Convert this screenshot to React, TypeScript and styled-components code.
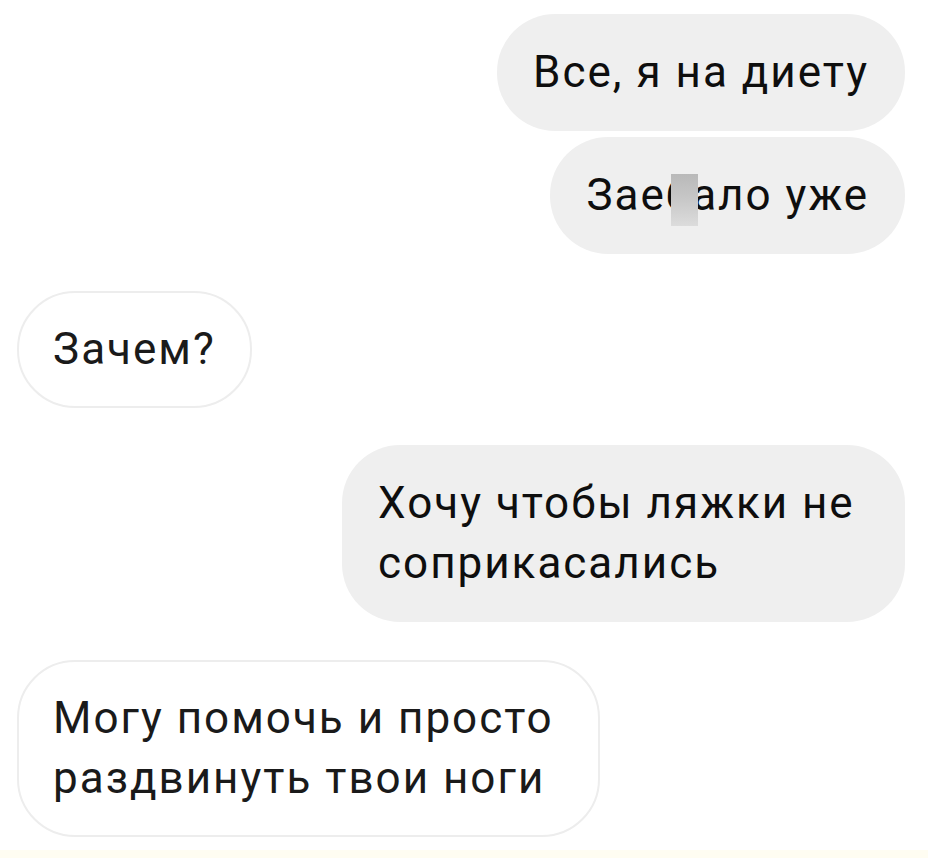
import styled, { createGlobalStyle } from "styled-components";

const GlobalStyle = createGlobalStyle`
  html, body {
    margin: 0;
    padding: 0;
    background: #ffffff;
  }
  body {
    font-family: Roboto, "Noto Sans", "Liberation Sans", sans-serif;
  }
`;

const Screen = styled.div`
  width: 928px;
  height: 858px;
  overflow: hidden;
  box-sizing: border-box;
  padding: 14px 23px 0 17px;
  display: flex;
  flex-direction: column;
  position: relative;
`;

const Row = styled.div<{ $out?: boolean; $gap: number }>`
  display: flex;
  justify-content: ${(p) => (p.$out ? "flex-end" : "flex-start")};
  margin-top: ${(p) => p.$gap}px;
`;

const Bubble = styled.div<{ $out?: boolean; $width?: number }>`
  box-sizing: border-box;
  width: ${(p) => (p.$width ? `${p.$width}px` : "auto")};
  padding: ${(p) => (p.$out ? "28px 36px 29px 36px" : "26px 34px 27px 34px")};
  border-radius: 58px;
  font-size: 44px;
  line-height: 60px;
  letter-spacing: 2px;
  background: ${(p) => (p.$out ? "#efefef" : "#ffffff")};
  border: ${(p) => (p.$out ? "none" : "2px solid #ededed")};
  color: ${(p) => (p.$out ? "#0e0e0e" : "#1a1a1a")};
`;

const Censored = styled.span`
  position: relative;
  &::after {
    content: "";
    position: absolute;
    left: 5px;
    top: 5px;
    width: 27px;
    height: 52px;
    background: linear-gradient(180deg, #b9b9b9 0%, #c8c8c8 50%, #dcdcdc 100%);
  }
`;

const BottomStrip = styled.div`
  position: absolute;
  left: 0;
  right: 0;
  bottom: 0;
  height: 8px;
  background: #fffdf2;
`;

export default function App() {
  return (
    <>
      <GlobalStyle />
      <Screen>
        <Row $out $gap={0}>
          <Bubble $out>Все, я на диету</Bubble>
        </Row>
        <Row $out $gap={6}>
          <Bubble $out>
            Зае<Censored>б</Censored>ало уже
          </Bubble>
        </Row>
        <Row $gap={37}>
          <Bubble>Зачем?</Bubble>
        </Row>
        <Row $out $gap={37}>
          <Bubble $out $width={563}>
            Хочу чтобы ляжки не соприкасались
          </Bubble>
        </Row>
        <Row $gap={38}>
          <Bubble $width={583}>Могу помочь и просто раздвинуть твои ноги</Bubble>
        </Row>
        <BottomStrip />
      </Screen>
    </>
  );
}
